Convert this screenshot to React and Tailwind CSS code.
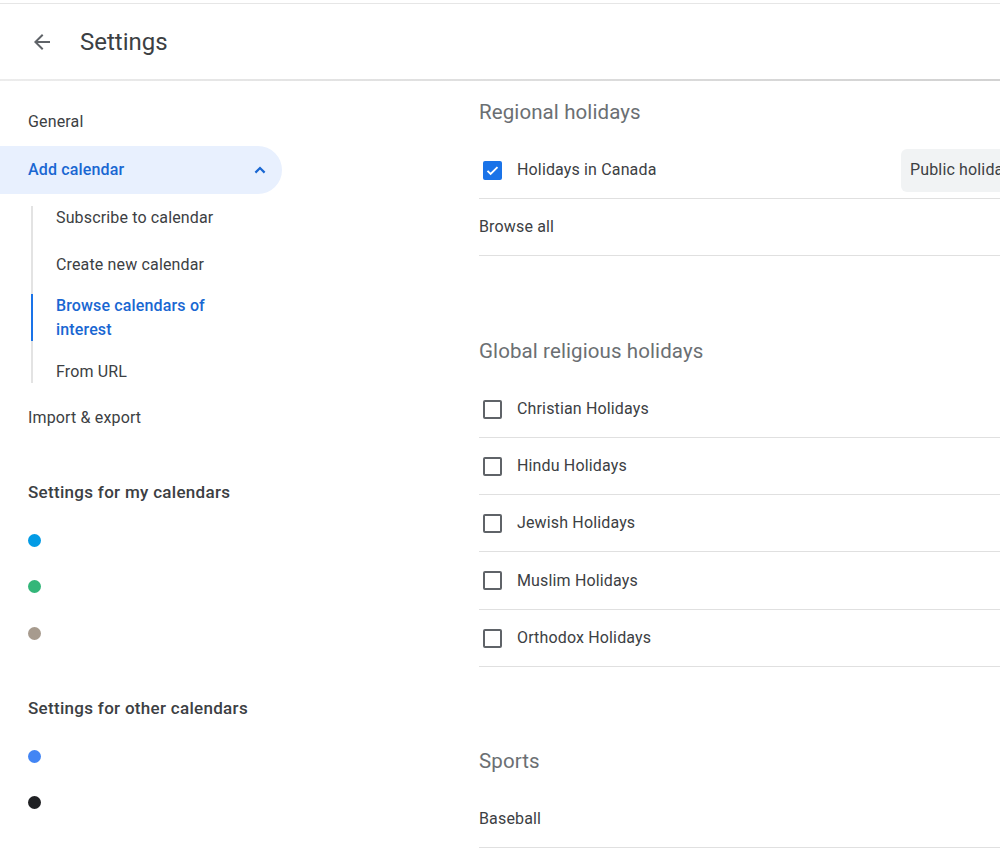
import React from "react";

const font = { fontFamily: "Roboto, 'Noto Sans', Arial, sans-serif" };

function SubItem({ children, first, last, active, tall }) {
  return (
    <div className={`flex pl-[31px] ${tall ? "h-[60px]" : "h-[47px]"}`}>
      {active ? (
        <div className="flex flex-col w-[2px]">
          <div className="h-[6px] bg-[#e3e3e3]" />
          <div className="flex-1 bg-[#1a73e8]" />
          <div className="h-[7px] bg-[#e3e3e3]" />
        </div>
      ) : (
        <div className={`w-[2px] bg-[#e3e3e3] ${first ? "mt-[12px]" : ""} ${last ? "mb-[12px]" : ""}`} />
      )}
      <div
        className={`ml-[23px] flex items-center text-[16px] leading-[24px] tracking-[0.15px] ${
          active ? "text-[#1967d2] font-medium" : "text-[#3c4043]"
        }`}
      >
        {children}
      </div>
    </div>
  );
}

function Dot({ color, h = "h-[47px]" }) {
  return (
    <div className={`${h} flex items-center pl-[28px]`}>
      <div className={`w-[13px] h-[13px] rounded-full ${color}`} />
    </div>
  );
}

function Checkbox({ checked }) {
  if (checked) {
    return (
      <div className="w-[19px] h-[19px] rounded-[2px] bg-[#1a73e8] flex items-center justify-center ml-[4px] shrink-0">
        <svg width="15" height="15" viewBox="0 0 24 24">
          <path d="M4 12.5l5 5L20 6.5" fill="none" stroke="white" strokeWidth="3" />
        </svg>
      </div>
    );
  }
  return <div className="w-[19px] h-[19px] rounded-[2px] border-2 border-[#5f6368] ml-[4px] shrink-0" />;
}

function Row({ children, checkbox, checked, chip, h = "h-[57px]" }) {
  return (
    <div className={`${h} border-b border-[#e0e0e0] flex items-center`}>
      {checkbox && <Checkbox checked={checked} />}
      <div className={`text-[16px] tracking-[0.15px] text-[#3c4043] ${checkbox ? "ml-[15px]" : ""} flex-1`}>
        {children}
      </div>
      {chip && (
        <div className="w-[298px] h-[43px] rounded-[6px] bg-[#f1f3f4] flex items-center pl-[9px] text-[16px] tracking-[0.15px] text-[#3c4043] whitespace-nowrap">
          {chip}
        </div>
      )}
    </div>
  );
}

function Heading({ children, className = "" }) {
  return (
    <div className={`h-[60px] flex items-center text-[20.5px] tracking-[0.1px] text-[#6b6f73] ${className}`}>
      {children}
    </div>
  );
}

export default function App() {
  return (
    <div style={font} className="w-[1000px] h-[850px] overflow-hidden bg-white">
      <div className="h-[3px] bg-white" />
      <div className="h-[1px] bg-[#e6e6e6]" />
      <div className="h-[75px] flex items-center bg-white">
        <div className="ml-[30px] w-[24px] h-[24px]">
          <svg width="24" height="24" viewBox="0 0 24 24">
            <path
              d="M20 11H7.83l5.59-5.59L12 4l-8 8 8 8 1.41-1.41L7.83 13H20v-2z"
              fill="#5f6368"
            />
          </svg>
        </div>
        <div className="ml-[26px] text-[24px] text-[#3c4043]">Settings</div>
      </div>
      <div className="h-[2px] bg-gradient-to-r from-[#ececec] via-[#dedede] to-[#d2d2d2]" />

      <div className="flex">
        <div className="w-[282px] shrink-0 pt-[17px]">
          <div className="h-[48px] flex items-center pl-[28px] text-[16px] tracking-[0.15px] text-[#3c4043]">General</div>
          <div className="h-[48px] flex items-center justify-between pl-[28px] pr-[10px] bg-[#e8f0fe] rounded-r-full">
            <span className="text-[16px] tracking-[0.15px] font-medium text-[#1967d2]">Add calendar</span>
            <svg width="24" height="24" viewBox="0 0 24 24">
              <path d="M7.4 14.6L12 10l4.6 4.6" fill="none" stroke="#1967d2" strokeWidth="2.2" />
            </svg>
          </div>
          <SubItem first>Subscribe to calendar</SubItem>
          <SubItem>Create new calendar</SubItem>
          <SubItem active tall>
            <span className="block w-[170px]">Browse calendars of interest</span>
          </SubItem>
          <SubItem last>From URL</SubItem>
          <div className="h-[46px] flex items-center pl-[28px] text-[16px] tracking-[0.15px] text-[#3c4043]">
            Import &amp; export
          </div>

          <div className="mt-[28px] h-[48px] flex items-center pl-[28px] text-[17px] tracking-[0.3px] font-medium text-[#3c4043]">
            Settings for my calendars
          </div>
          <Dot color="bg-[#039be5]" h="h-[46px]" />
          <Dot color="bg-[#33b679]" />
          <Dot color="bg-[#a79b8e]" />

          <div className="mt-[28px] h-[48px] flex items-center pl-[28px] text-[17px] tracking-[0.3px] font-medium text-[#3c4043]">
            Settings for other calendars
          </div>
          <Dot color="bg-[#4285f4]" h="h-[46px]" />
          <Dot color="bg-[#202124]" />
        </div>

        <div className="ml-[197px] w-[720px] shrink-0 pt-[1px]">
          <Heading>Regional holidays</Heading>
          <Row checkbox checked chip="Public holidays and observances">
            Holidays in Canada
          </Row>
          <Row>Browse all</Row>

          <Heading className="mt-[65px]">Global religious holidays</Heading>
          <Row checkbox>Christian Holidays</Row>
          <Row checkbox>Hindu Holidays</Row>
          <Row checkbox>Jewish Holidays</Row>
          <Row checkbox h="h-[58px]">Muslim Holidays</Row>
          <Row checkbox>Orthodox Holidays</Row>

          <Heading className="mt-[64px]">Sports</Heading>
          <Row>Baseball</Row>
        </div>
      </div>
    </div>
  );
}
